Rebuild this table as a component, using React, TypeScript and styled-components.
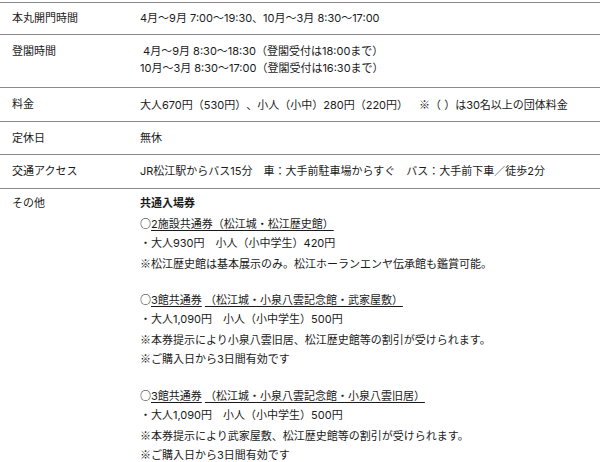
import React from "react";
import styled, { createGlobalStyle } from "styled-components";

const Global = createGlobalStyle`
  html, body { margin: 0; padding: 0; background: #fff; }
  body {
    font-family: Inter, "Noto Sans CJK JP", sans-serif;
    font-size: 11px;
    color: #1a1a1a;
    text-spacing-trim: space-all;
  }
`;

const Table = styled.div`
  padding-top: 2px;
  width: 600px;
`;

const Row = styled.div<{ $pt?: number; $pb?: number }>`
  display: grid;
  grid-template-columns: 128px 1fr;
  border-top: 1px solid #8a8a8a;
  padding: ${(p) => p.$pt ?? 10}px 0 ${(p) => p.$pb ?? 9}px 12px;
  line-height: 13px;
`;

const Label = styled.div<{ $pt?: number }>`
  padding-top: ${(p) => p.$pt ?? 0}px;
`;

const Value = styled.div<{ $lh?: number }>`
  line-height: ${(p) => p.$lh ?? 13}px;
  white-space: nowrap;
`;

const Line = styled.div<{ $h?: number; $bold?: boolean }>`
  height: ${(p) => p.$h ?? 20}px;
  line-height: ${(p) => p.$h ?? 20}px;
  font-weight: ${(p) => (p.$bold ? 700 : 400)};
  white-space: nowrap;
`;

const Spacer = styled.div<{ $h: number }>`
  height: ${(p) => p.$h}px;
`;

const Mark = styled.span<{ $bold?: boolean }>`
  font-family: "Noto Sans CJK JP", sans-serif;
  font-weight: ${(p) => (p.$bold ? 700 : 400)};
`;

const U = styled.span`
  text-decoration: underline;
  text-underline-offset: 2px;
`;

const Note = () => <Mark>※</Mark>;

export default function App() {
  return (
    <>
      <Global />
      <Table>
        <Row $pt={9}>
          <Label>本丸開門時間</Label>
          <Value>4月～9月 7:00～19:30、10月～3月 8:30～17:00</Value>
        </Row>
        <Row $pt={8} $pb={10}>
          <Label $pt={2}>登閣時間</Label>
          <Value $lh={17}>
            <div>&nbsp;4月～9月 8:30～18:30（登閣受付は18:00まで）</div>
            <div>10月～3月 8:30～17:00（登閣受付は16:30まで）</div>
          </Value>
        </Row>
        <Row>
          <Label>料金</Label>
          <Value>
            大人670円（530円）、小人（小中）280円（220円）　<Note />（ ）は30名以上の団体料金
          </Value>
        </Row>
        <Row>
          <Label>定休日</Label>
          <Value>無休</Value>
        </Row>
        <Row $pb={10}>
          <Label>交通アクセス</Label>
          <Value>JR松江駅からバス15分　車：大手前駐車場からすぐ　バス：大手前下車／徒歩2分</Value>
        </Row>
        <Row $pt={4} $pb={0}>
          <Label $pt={4}>その他</Label>
          <Value>
            <Line $bold>共通入場券</Line>
            <Line><Mark $bold>○</Mark><U>2施設共通券（松江城・松江歴史館）</U></Line>
            <Line>・大人930円　小人（小中学生）420円</Line>
            <Line><Note />松江歴史館は基本展示のみ。松江ホーランエンヤ伝承館も鑑賞可能。</Line>
            <Spacer $h={16} />
            <Line><Mark $bold>○</Mark><U>3館共通券</U> <U>（松江城・小泉八雲記念館・武家屋敷）</U></Line>
            <Line>・大人1,090円　小人（小中学生）500円</Line>
            <Line><Note />本券提示により小泉八雲旧居、松江歴史館等の割引が受けられます。</Line>
            <Line $h={18}><Note />ご購入日から3日間有効です</Line>
            <Spacer $h={18} />
            <Line><Mark $bold>○</Mark><U>3館共通券</U> <U>（松江城・小泉八雲記念館・小泉八雲旧居）</U></Line>
            <Line>・大人1,090円　小人（小中学生）500円</Line>
            <Line><Note />本券提示により武家屋敷、松江歴史館等の割引が受けられます。</Line>
            <Line $h={18}><Note />ご購入日から3日間有効です</Line>
          </Value>
        </Row>
      </Table>
    </>
  );
}
